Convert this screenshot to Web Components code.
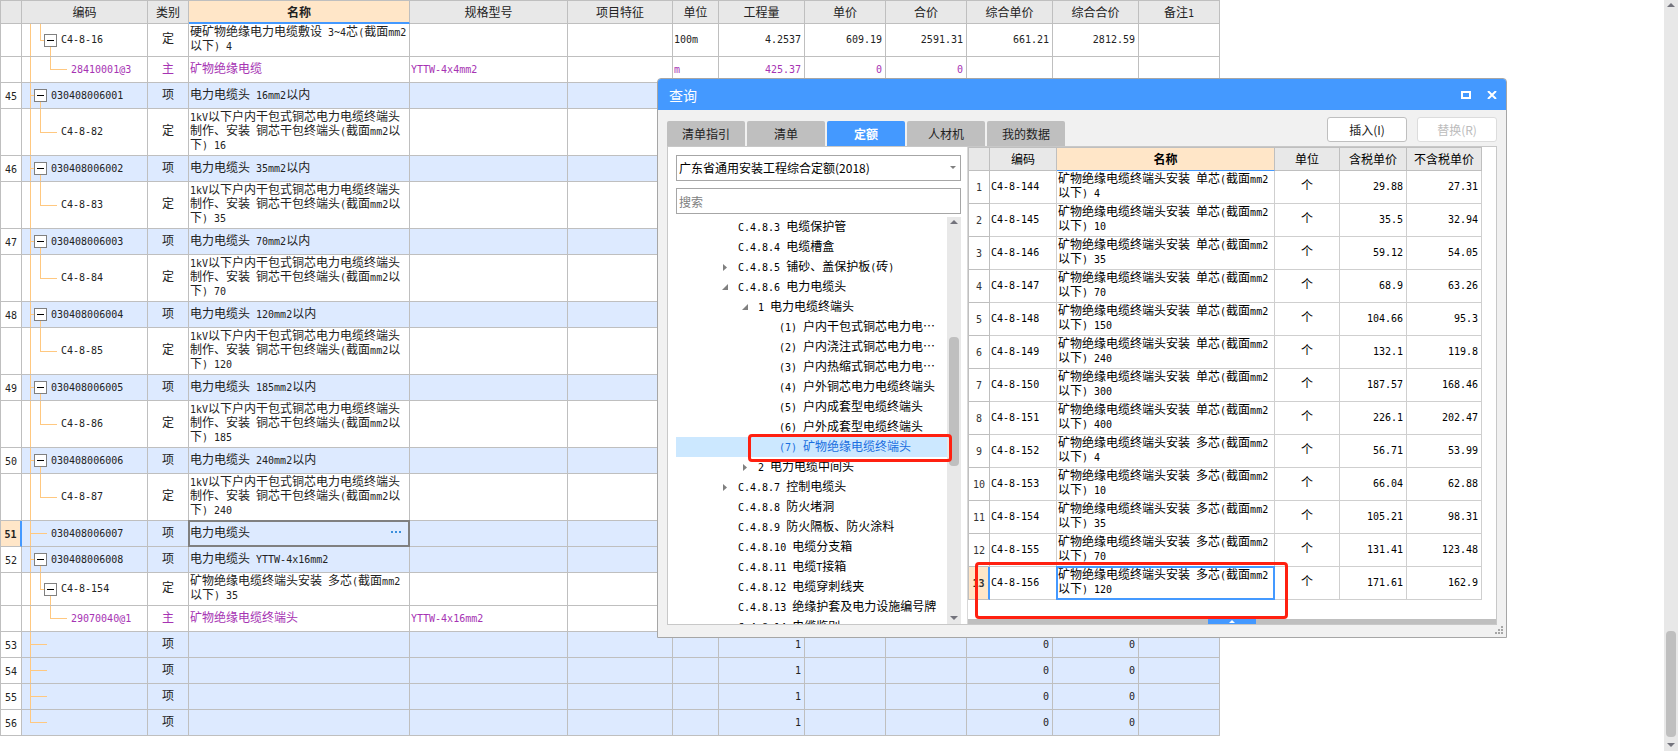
<!DOCTYPE html>
<html lang="zh-CN">
<head>
<meta charset="utf-8">
<title>查询</title>
<style>
  html, body { height: 100%; margin: 0; }
  body {
    background: #fff;
    color: #222;
    font: 12px/14px "Noto Sans CJK SC", sans-serif;
    overflow: hidden;
  }
</style>
</head>
<body>
<app-workspace>
  <bill-grid></bill-grid>
  <scroll-bar slot="scroll" style="--before: 617; --thumb: 106; --after: 0"></scroll-bar>
  <query-dialog slot="window" caption="查询">
    <tab-strip slot="tabs" tabs="清单指引,清单,定额,人材机,我的数据" active="2"></tab-strip>
    <quota-picker slot="side"></quota-picker>
    <quota-grid slot="main"></quota-grid>
  </query-dialog>
</app-workspace>

<script>
/* Latin runs use a half-width monospaced face beside full-width Chinese. */
const escapeHtml = s => s.replace(/&/g, "&amp;").replace(/</g, "&lt;");
const mix = s => escapeHtml(String(s)).replace(/[\x20-\x7e]+/g, m => `<span class="n">${m}</span>`);

const TEXT = `
  * { box-sizing: border-box; }
  .n { font-family: "DejaVu Sans Mono", monospace; font-size: 10px; line-height: 1px; }
`;
const GRID = TEXT + `
  table { border-collapse: separate; border-spacing: 0; table-layout: fixed;
          border-top: 1px solid #bfbfbf; border-left: 1px solid #bfbfbf; }
  th, td { border-right: 1px solid var(--line, #bfbfbf); border-bottom: 1px solid var(--line, #bfbfbf);
           padding: 0 0 4px 1px; text-align: left; font-weight: normal; vertical-align: middle; }
  thead th { background: #e8e8e8; border-color: #bfbfbf; height: 23px; padding: 0; text-align: center; }
  thead th.on { background: #ffe6c8; font-weight: bold; border-bottom-color: #4499ff; }
  tbody th { background: #fff; border-color: #bfbfbf; padding: 0 0 2px; text-align: center; }
  tbody th.on { background: #ffe6c8; font-weight: bold; border-right: 2px solid #4499ff; }
  td.c { text-align: center; padding-left: 0; }
  td.r { text-align: right; padding-right: 3px; }
  td.pick { position: relative; }
  td.pick::after { content: ""; position: absolute; inset: -1px; border: 2px solid var(--ring); pointer-events: none; }
`;

const define = (name, html) => customElements.define(name, class extends HTMLElement {
  connectedCallback() {
    if (this.shadowRoot) return;
    this.attachShadow({ mode: "open" }).innerHTML = typeof html === "function" ? html(this) : html;
  }
});

/* Page frame: content, scroll bar at the right, floating window on top. */
define("app-workspace", `
  <style>
    :host { display: flex; height: 100vh; position: relative; overflow: hidden; }
    main { flex: 1; min-width: 0; overflow: hidden; }
    ::slotted([slot=window]) { position: absolute; left: 657px; top: 78px; }
  </style>
  <main><slot></slot></main>
  <slot name="scroll"></slot>
  <slot name="window"></slot>`);

define("scroll-bar", `
  <style>
    :host { display: flex; flex-direction: column; align-items: center; width: 14px; flex: none;
            background: #e8e8e8; }
    svg { display: block; flex: none; }
    .sp { flex: var(--before) 0 0; }
    .th { flex: var(--thumb) 0 0; width: 10px; border-radius: 4px; background: #bfbfbf; }
    .sa { flex: var(--after) 0 0; }
  </style>
  <svg width="14" height="14"><path d="M3 7h8L7 3z" fill="#73737c"/></svg>
  <div class="sp"></div><div class="th"></div><div class="sa"></div>
  <svg width="14" height="14"><path d="M3 6h8L7 10z" fill="#73737c"/></svg>`);

/* Bill of quantities: number, tree kind, code, category, name, spec, unit, figures. */
const kv = n => `1kV以下户内干包式铜芯电力电缆终端头制作、安装 铜芯干包终端头(截面mm2以下) ${n}`;
const BILL = [
  ["", "l2 open", "C4-8-16", "定", "硬矿物绝缘电力电缆敷设 3~4芯(截面mm2以下) 4", "", "100m", "4.2537", "609.19", "2591.31", "661.21", "2812.59"],
  ["", "l3", "28410001@3", "主", "矿物绝缘电缆", "YTTW-4x4mm2", "m", "425.37", "0", "0"]
];
[16, 35, 70, 120, 185, 240].forEach((n, i) => {
  BILL.push([45 + i, "l1 open", "03040800600" + (i + 1), "项", `电力电缆头 ${n}mm2以内`]);
  BILL.push(["", "l2", "C4-8-" + (82 + i), "定", kv(n)]);
});
BILL.push(
  [51, "l1", "030408006007", "项", "电力电缆头"],
  [52, "l1 open", "030408006008", "项", "电力电缆头 YTTW-4x16mm2"],
  ["", "l2 open", "C4-8-154", "定", "矿物绝缘电缆终端头安装 多芯(截面mm2以下) 35"],
  ["", "l3", "29070040@1", "主", "矿物绝缘电缆终端头", "YTTW-4x16mm2"]
);
for (let i = 53; i <= 56; i++)
  BILL.push([i, i === 56 ? "l1 last" : "l1", "", "项", "", "", "", "1", "", "", "0", "0"]);

const billRow = r => {
  const [no, kind, code, cat, name, spec = "", unit = "", ...nums] = r;
  const picked = no === 51;
  const lines = name.startsWith("1kV") ? 3 : name.includes("截面") ? 2 : 1;
  const cls = (kind.startsWith("l1") ? "item" : kind === "l3" ? "mat" : "") + " h" + lines;
  const figures = [0, 1, 2, 3, 4].map(i => `<td class="r">${mix(nums[i] || "")}</td>`).join("");
  return `<tr class="${cls}">
    <th scope="row" class="${picked ? "on" : ""}">${mix(no)}</th>
    <td class="code ${kind}"><div>${kind.includes("open") ? `<button aria-label="折叠"><svg width="7" height="1"><path d="M0 0h7v1H0z"/></svg></button>` : ""}<span>${mix(code)}</span></div></td>
    <td class="c">${cat}</td>
    <td class="${picked ? "pick" : ""}">${picked ? `<div class="edit"><span>${name}</span><button aria-label="更多"><svg width="10" height="2" fill="#3b8fdc"><path d="M0 0h2v2H0zM4 0h2v2H4zM8 0h2v2H8z"/></svg></button></div>` : mix(name)}</td>
    <td>${mix(spec)}</td><td></td><td>${mix(unit)}</td>${figures}<td></td></tr>`;
};
define("bill-grid", `
  <style>${GRID}
    :host { display: block; --ring: #808080; }
    table { width: 1220px; }
    thead th.on { border-bottom: 2px solid #4499ff; }
    .h1 > * { height: 26px; } .h2 > * { height: 33px; } .h3 > * { height: 47px; }
    .item td { background-color: #ddeaff; }
    .mat td { color: #a633b3; }
    td.code { --o: linear-gradient(#ffc880, #ffc880); background-repeat: no-repeat; padding: 0;
              background-image: var(--o), var(--o), var(--o), var(--o); }
    td.code div { display: flex; align-items: center; gap: 4px; }
    td.code div > span { padding-bottom: 4px; }
    td.code button { width: 13px; height: 13px; padding: 0; border: 1px solid #808080; background: #fff;
                     display: grid; place-items: center; }
    .l1 { background-size: 1px 100%, 17px 1px, 0 0, 0 0; background-position: 8px 0, 8px 50%, 0 0, 0 0; }
    .l1 div { padding-left: 29px; }
    .l1.open { background-size: 1px 100%, 5px 1px, 1px 50%, 0 0; background-position: 8px 0, 8px 50%, 18px 100%, 0 0; }
    .l1.open div { padding-left: 12px; }
    .l1.last { background-size: 1px 50%, 17px 1px, 0 0, 0 0; }
    .l2 { background-size: 1px 100%, 17px 1px, 1px 50%, 0 0; background-position: 8px 0, 18px 50%, 18px 0, 0 0; }
    .l2 div { padding-left: 39px; }
    .l2.open { background-size: 1px 100%, 5px 1px, 1px 50%, 1px 50%; background-position: 8px 0, 18px 50%, 18px 0, 28px 100%; }
    .l2.open div { padding-left: 22px; }
    .l3 { background-size: 1px 100%, 17px 1px, 1px 50%, 0 0; background-position: 8px 0, 28px 50%, 28px 0, 0 0; }
    .l3 div { padding-left: 49px; }
    .edit { display: flex; justify-content: space-between; align-items: center; padding-right: 8px; }
    .edit button { border: 0; padding: 0; background: none; display: flex; }
  </style>
  <table>
    <colgroup>${[21, 126, 41, 221, 158, 105, 46, 86, 81, 81, 86, 86, 81].map(w => `<col style="width:${w}px">`).join("")}</colgroup>
    <thead><tr>${["", "编码", "类别", "名称", "规格型号", "项目特征", "单位", "工程量", "单价", "合价", "综合单价", "综合合价", "备注1"]
      .map(h => `<th scope="col" class="${h === "名称" ? "on" : ""}">${mix(h)}</th>`).join("")}</tr></thead>
    <tbody>${BILL.map(billRow).join("")}</tbody>
  </table>`);

/* Floating query window. */
define("query-dialog", el => `
  <style>${TEXT}
    :host { display: flex; flex-direction: column; box-sizing: border-box; width: 850px; height: 560px;
            border: 1px solid #a6a6a6; border-radius: 4px 4px 0 0; background: #f1f1f1; overflow: hidden; color: #000; }
    header { display: flex; align-items: center; height: 31px; flex: none; padding: 0 8px 0 11px;
             background: #4499ff; color: #fff; }
    h1 { flex: 1; margin: 0; font-size: 14px; line-height: 20px; font-weight: normal; }
    header button { border: 0; background: none; padding: 0; width: 12px; height: 12px; margin-left: 14px; display: grid; place-items: center; }
    .bar { display: flex; align-items: flex-end; justify-content: space-between; height: 36px; flex: none; padding: 0 9px; }
    .acts { display: flex; gap: 10px; padding-bottom: 4px; }
    .acts button { width: 80px; height: 25px; padding: 0; border: 1px solid #bfbfbf; border-radius: 3px; background: #fff;
                   font: inherit; color: #222; }
    .acts button:disabled { border-color: #dcdcdc; color: #bcbcbc; }
    .body { flex: 1; min-height: 0; display: flex; margin: 0 9px; border: 1px solid #c8c8c8; background: #fff; }
    footer { height: 12px; flex: none; display: flex; justify-content: flex-end; padding: 1px 3px 0 0; }
  </style>
  <header><h1>${el.getAttribute("caption")}</h1>
    <button aria-label="最大化"><svg width="10" height="8"><path d="M1 1h8v6H1z" fill="none" stroke="#fff" stroke-width="2"/></svg></button>
    <button aria-label="关闭"><svg width="10" height="8"><path d="M1 0L9 8M9 0L1 8" stroke="#fff" stroke-width="2"/></svg></button>
  </header>
  <div class="bar"><slot name="tabs"></slot>
    <div class="acts"><button>插入(I)</button><button disabled>替换(R)</button></div></div>
  <div class="body"><slot name="side"></slot><slot name="main"></slot></div>
  <footer><svg width="8" height="8" fill="#a6a6a6"><path d="M6 0h2v2H6zM3 3h2v2H3zM6 3h2v2H6zM0 6h2v2H0zM3 6h2v2H3zM6 6h2v2H6z"/></svg></footer>`);

define("tab-strip", el => `
  <style>
    :host { display: flex; gap: 2px; }
    button { width: 78px; height: 25px; padding: 0; border: 0; border-radius: 2px 2px 0 0; background: #bfbfbf;
             color: #222; font: inherit; }
    button[aria-selected=true] { background: #4499ff; color: #fff; font-weight: bold; }
  </style>
  ${el.getAttribute("tabs").split(",").map((t, i) =>
    `<button role="tab" aria-selected="${String(i) === el.getAttribute("active")}">${t}</button>`).join("")}`);

/* Red frame laid over the element it marks. */
define("mark-frame", `<style>:host { position: absolute; box-sizing: border-box; border: 3px solid #ff2010; border-radius: 4px;
  pointer-events: none; z-index: 2; }</style>`);

/* Quota library drop-down, search box and chapter tree. */
const TREE = [
  [1, "", "C.4.8.3 电缆保护管"], [1, "", "C.4.8.4 电缆槽盒"], [1, "shut", "C.4.8.5 铺砂、盖保护板(砖)"],
  [1, "open", "C.4.8.6 电力电缆头"], [2, "open", "1 电力电缆终端头"],
  [3, "", "(1) 户内干包式铜芯电力电…"], [3, "", "(2) 户内浇注式铜芯电力电…"], [3, "", "(3) 户内热缩式铜芯电力电…"],
  [3, "", "(4) 户外铜芯电力电缆终端头"], [3, "", "(5) 户内成套型电缆终端头"], [3, "", "(6) 户外成套型电缆终端头"],
  [3, "sel", "(7) 矿物绝缘电缆终端头"], [2, "shut", "2 电力电缆中间头"], [1, "shut", "C.4.8.7 控制电缆头"],
  [1, "", "C.4.8.8 防火堵洞"], [1, "", "C.4.8.9 防火隔板、防火涂料"], [1, "", "C.4.8.10 电缆分支箱"],
  [1, "", "C.4.8.11 电缆T接箱"], [1, "", "C.4.8.12 电缆穿刺线夹"], [1, "", "C.4.8.13 绝缘护套及电力设施编号牌"],
  [1, "", "C.4.8.14 电缆鉴别"]
];
const ARROW = { open: "M6 0v6H0z", shut: "M1 0l4 3.5L1 7z" };
define("quota-picker", `
  <style>${TEXT}
    :host { display: flex; flex-direction: column; width: 299px; flex: none; box-sizing: border-box; padding: 8px 6px 0 8px; }
    select, input { width: 100%; height: 26px; flex: none; border: 1px solid #a6a6a6; border-radius: 0; background: #fff;
                    font: inherit; color: #000; margin: 0; padding: 0 2px; }
    .pick { display: grid; margin-bottom: 7px; }
    .pick > * { grid-area: 1 / 1; }
    .pick svg { justify-self: end; align-self: center; margin-right: 5px; pointer-events: none; }
    select { appearance: none; }
    input::placeholder { color: #808080; opacity: 1; }
    .list { flex: 1; min-height: 0; display: flex; margin-top: 3px; position: relative; }
    ul { flex: 1; min-width: 0; margin: 0; padding: 0; list-style: none; overflow: hidden; }
    li { display: flex; align-items: center; gap: 9px; height: 20px; white-space: nowrap; padding-left: 46px; }
    li svg { width: 7px; height: 7px; flex: none; fill: #808080; }
    li span { padding-bottom: 1px; }
    li > span { padding-bottom: 3px; }
    li.d2 { padding-left: 66px; } li.d3 { padding-left: 87px; }
    li.sel { background: #cce8ff; color: #1a6fe0; }
    mark-frame { left: 72px; top: 217px; width: 204px; height: 28px; }
  </style>
  <div class="pick"><select aria-label="定额库"><option>广东省通用安装工程综合定额(2018)</option></select>
    <svg width="6" height="4"><path d="M0 0h6L3 3z" fill="#808080"/></svg></div>
  <input type="search" placeholder="搜索" aria-label="搜索">
  <div class="list"><ul role="tree">${TREE.map(([d, s, t]) =>
    `<li role="treeitem" class="d${d} ${s}"><svg viewBox="0 0 7 7">${ARROW[s] ? `<path d="${ARROW[s]}"/>` : ""}</svg><span>${mix(t)}</span></li>`).join("")}</ul>
    <scroll-bar style="--before: 106; --thumb: 129; --after: 144"></scroll-bar>
    <mark-frame></mark-frame></div>`);

const SIZES = [4, 10, 35, 70, 150, 240, 300, 400, 4, 10, 35, 70, 120];
const PRICES = [["29.88", "27.31"], ["35.5", "32.94"], ["59.12", "54.05"], ["68.9", "63.26"], ["104.66", "95.3"],
  ["132.1", "119.8"], ["187.57", "168.46"], ["226.1", "202.47"], ["56.71", "53.99"], ["66.04", "62.88"],
  ["105.21", "98.31"], ["131.41", "123.48"], ["171.61", "162.9"]];
define("quota-grid", `
  <style>${GRID}
    :host { display: flex; flex-direction: column; flex: 1; min-width: 0; position: relative; --line: #cfcfcf; --ring: #4499ff;
            box-sizing: border-box; border-left: 1px solid #d8d8d8; }
    table { width: 514px; }
    tbody > tr > * { height: 33px; }
    tbody th { color: #333; }
    .fold { margin-top: auto; height: 5px; background: #bfbfbf; display: flex; justify-content: center; }
    .fold button { width: 48px; height: 5px; border: 0; padding: 0; background: #4499ff; display: flex; justify-content: center; align-items: center; }
    mark-frame { left: 7px; top: 415px; width: 313px; height: 57px; }
  </style>
  <table>
    <colgroup>${[21, 67, 218, 65, 67, 75].map(w => `<col style="width:${w}px">`).join("")}</colgroup>
    <thead><tr>${["", "编码", "名称", "单位", "含税单价", "不含税单价"]
      .map(h => `<th scope="col" class="${h === "名称" ? "on" : ""}">${h}</th>`).join("")}</tr></thead>
    <tbody>${SIZES.map((n, i) => `<tr>
      <th scope="row" class="${i === 12 ? "on" : ""}">${mix(i + 1)}</th>
      <td>${mix("C4-8-" + (144 + i))}</td>
      <td class="${i === 12 ? "pick" : ""}">${mix(`矿物绝缘电缆终端头安装 ${i < 8 ? "单" : "多"}芯(截面mm2以下) ${n}`)}</td>
      <td class="c">个</td><td class="r">${mix(PRICES[i][0])}</td><td class="r">${mix(PRICES[i][1])}</td></tr>`).join("")}</tbody>
  </table>
  <div class="fold"><button aria-label="展开"><svg width="6" height="3"><path d="M0 3h6L3 0z" fill="#fff"/></svg></button></div>
  <mark-frame></mark-frame>`);
</script>
</body>
</html>
